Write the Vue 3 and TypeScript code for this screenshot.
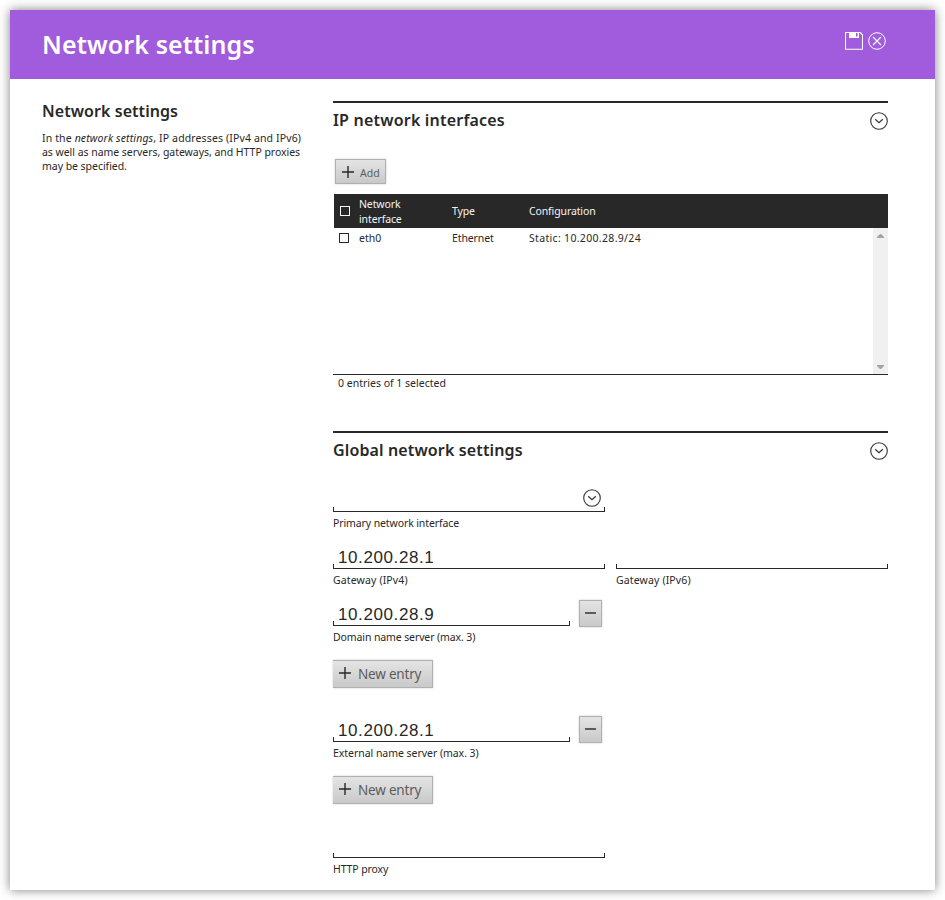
<script setup lang="ts">
import { ref } from 'vue'

interface NetworkInterface {
  name: string
  type: string
  configuration: string
}

const interfaces: NetworkInterface[] = [
  { name: 'eth0', type: 'Ethernet', configuration: 'Static: 10.200.28.9/24' },
]

const gatewayV4 = ref('10.200.28.1')
const gatewayV6 = ref('')
const domainServer = ref('10.200.28.9')
const externalServer = ref('10.200.28.1')
const proxy = ref('')
</script>

<template>
  <main class="window">
    <header class="titlebar">
      <h1>Network settings</h1>
      <div class="actions">
        <svg width="18" height="18" viewBox="0 0 18 18" fill="none" stroke="#fff">
          <path d="M.5.5H15.2L17.5 2.8V17.2H.5Z" stroke-width="1.1" />
          <path d="M4 0H14V6H4ZM11 1V4.5H12.6V1Z" fill="#fff" fill-rule="evenodd" stroke="none" />
        </svg>
        <svg width="18" height="18" viewBox="0 0 18 18" fill="none" stroke="#fff">
          <circle cx="9" cy="9" r="8.3" stroke-width="1" />
          <path d="M5 5 13 13M13 5 5 13" stroke-width="1.1" />
        </svg>
      </div>
    </header>

    <div class="content">
      <aside>
        <h2>Network settings</h2>
        <p>
          <span class="wide">In the <em>network settings</em>, IP addresses (IPv4 and IPv6)</span><br />
          <span class="tight">as well as name servers, gateways, and HTTP proxies</span><br />
          <span class="tight">may be specified.</span>
        </p>
      </aside>

      <div class="main">
        <section class="interfaces">
          <div class="section-head">
            <h2 class="ip">IP network interfaces</h2>
            <svg width="18" height="18" viewBox="0 0 18 18" fill="none" stroke="#333">
              <circle cx="9" cy="9" r="8.3" stroke-width="1.1" />
              <path d="M5.2 7.3 9 10.8 12.8 7.3" stroke-width="1.2" />
            </svg>
          </div>
          <button class="btn add" type="button">
            <svg width="12" height="12" viewBox="0 0 12 12" stroke="#282828" stroke-width="1.4">
              <path d="M0 6H12M6 0V12" />
            </svg>
            <span>Add</span>
          </button>
          <div class="row thead">
            <i class="check"></i>
            <span class="c-name">Network<br />interface</span>
            <span class="c-type">Type</span>
            <span>Configuration</span>
          </div>
          <div class="tbody">
            <div class="rows">
              <div v-for="item in interfaces" :key="item.name" class="row">
                <i class="check"></i>
                <span class="c-name">{{ item.name }}</span>
                <span class="c-type">{{ item.type }}</span>
                <span class="c-conf">{{ item.configuration }}</span>
              </div>
            </div>
            <div class="scroll">
              <svg width="7" height="4" viewBox="0 0 7 4"><path d="M0 4V3L3 0H4L7 3V4Z" fill="#a3a3a3" /></svg>
              <svg width="7" height="4" viewBox="0 0 7 4"><path d="M0 0V1L3 4H4L7 1V0Z" fill="#a3a3a3" /></svg>
            </div>
          </div>
          <div class="status">0 entries of 1 selected</div>
        </section>

        <section>
          <div class="section-head">
            <h2 class="global">Global network settings</h2>
            <svg width="18" height="18" viewBox="0 0 18 18" fill="none" stroke="#333">
              <circle cx="9" cy="9" r="8.3" stroke-width="1.1" />
              <path d="M5.2 7.3 9 10.8 12.8 7.3" stroke-width="1.2" />
            </svg>
          </div>

          <div class="line first">
            <div class="field">
              <div class="value select">
                <svg width="18" height="18" viewBox="0 0 18 18" fill="none" stroke="#333">
                  <circle cx="9" cy="9" r="8.3" stroke-width="1.1" />
                  <path d="M5.2 7.3 9 10.8 12.8 7.3" stroke-width="1.2" />
                </svg>
              </div>
              <label>Primary network interface</label>
            </div>
          </div>
          <div class="line">
            <div class="field">
              <div class="value"><span>{{ gatewayV4 }}</span></div>
              <label class="wide">Gateway (IPv4)</label>
            </div>
            <div class="field">
              <div class="value"><span>{{ gatewayV6 }}</span></div>
              <label class="wide">Gateway (IPv6)</label>
            </div>
          </div>
          <div class="line">
            <div class="field short">
              <div class="value"><span>{{ domainServer }}</span></div>
              <label>Domain name server (max. 3)</label>
            </div>
            <button class="btn remove" type="button"><i></i></button>
          </div>
          <div class="entry">
            <button class="btn new" type="button">
              <svg width="12" height="12" viewBox="0 0 12 12" stroke="#282828" stroke-width="1.4">
                <path d="M0 6H12M6 0V12" />
              </svg>
              <span>New entry</span>
            </button>
          </div>
          <div class="line">
            <div class="field short">
              <div class="value"><span>{{ externalServer }}</span></div>
              <label class="tight">External name server (max. 3)</label>
            </div>
            <button class="btn remove" type="button"><i></i></button>
          </div>
          <div class="entry">
            <button class="btn new" type="button">
              <svg width="12" height="12" viewBox="0 0 12 12" stroke="#282828" stroke-width="1.4">
                <path d="M0 6H12M6 0V12" />
              </svg>
              <span>New entry</span>
            </button>
          </div>
          <div class="line">
            <div class="field">
              <div class="value"><span>{{ proxy }}</span></div>
              <label>HTTP proxy</label>
            </div>
          </div>
        </section>
      </div>
    </div>
  </main>
</template>

<style>
body {
  background: #fff;
  overflow: hidden;
}
</style>

<style scoped>
* {
  box-sizing: border-box;
}
.window {
  width: 925px;
  height: 880px;
  margin: 10px;
  background: #fff;
  box-shadow: 0 0 10px rgba(0, 0, 0, 0.5);
  color: #282828;
  font: 10.5px/14px 'Noto Sans', sans-serif;
  white-space: nowrap;
}
svg {
  display: block;
  flex: none;
}
h1,
h2,
p {
  margin: 0;
}
.titlebar {
  height: 69px;
  padding: 0 49px 0 32px;
  display: flex;
  justify-content: space-between;
  background: #a05cdc;
  color: #fff;
}
h1 {
  font-size: 25px;
  line-height: 69px;
  font-weight: 600;
  letter-spacing: 0.1px;
}
.actions {
  display: flex;
  gap: 5px;
  padding-top: 22px;
}
.content {
  display: flex;
  padding: 21px 47px 0 32px;
}
aside {
  width: 291px;
  flex: none;
}
h2 {
  font-size: 16px;
  line-height: 22px;
  font-weight: 600;
  letter-spacing: 0.06px;
}
.ip {
  letter-spacing: 0.2px;
}
.global {
  letter-spacing: 0.13px;
}
aside p {
  padding-top: 9px;
}
.wide {
  letter-spacing: 0.13px;
}
.tight {
  letter-spacing: -0.04px;
}
.main {
  width: 555px;
  padding-top: 1px;
}
.interfaces {
  height: 330px;
}
.section-head {
  height: 37px;
  border-top: 2px solid #282828;
  display: flex;
  justify-content: space-between;
  padding-top: 9px;
}
.section-head h2 {
  line-height: 16px;
}
.btn {
  display: flex;
  align-items: center;
  border: 1px solid #b0b0b0;
  background: linear-gradient(#e4e4e4, #c9c9c9);
  box-shadow: 0 0 2px rgba(0, 0, 0, 0.2);
  color: #5c5c5c;
  font-family: inherit;
  padding: 0;
}
.add {
  width: 51px;
  height: 25px;
  margin: 21px 0 0 2px;
  padding-left: 6px;
  gap: 6px;
  font-size: 10.5px;
}
.add span {
  padding-top: 2px;
}
.row {
  display: flex;
  align-items: center;
  height: 20px;
  padding-left: 6px;
}
.thead {
  height: 34px;
  margin: 10px 0 0 1px;
  background: #282828;
  color: #f4f4f4;
  line-height: 15px;
  letter-spacing: -0.12px;
}
.check {
  width: 10px;
  height: 10px;
  flex: none;
  border: 1px solid currentColor;
  margin-right: 10px;
}
.thead .check {
  margin-right: 9px;
}
.c-name {
  width: 93px;
}
.thead .c-name {
  padding-top: 2px;
}
.c-type {
  width: 77px;
  letter-spacing: -0.12px;
}
.c-conf {
  letter-spacing: 0.32px;
}
.tbody {
  display: flex;
  height: 147px;
  border-bottom: 1px solid #282828;
}
.rows {
  flex: 1;
}
.scroll {
  width: 15px;
  background: #f0f0f0;
  display: flex;
  flex-direction: column;
  align-items: center;
  justify-content: space-between;
  padding: 6px 0 5px;
}
.status {
  padding: 1px 0 0 5px;
}
.line {
  display: flex;
  height: 57px;
}
.first {
  margin-top: 12px;
}
.field {
  flex: none;
  width: 272px;
  margin-right: 11px;
}
.short {
  width: 237px;
  margin-right: 9px;
}
.value {
  height: 32px;
  padding: 10px 0 0 5px;
  font: 17px/22px 'Liberation Sans', Arial, sans-serif;
  letter-spacing: 0.6px;
  background:
    linear-gradient(#282828, #282828) 0 100% / 100% 1px no-repeat,
    linear-gradient(#282828, #282828) 0 100% / 1px 5px no-repeat,
    linear-gradient(#282828, #282828) 100% 100% / 1px 5px no-repeat;
}
.select {
  display: flex;
  justify-content: flex-end;
  padding: 9px 4px 0 0;
}
label {
  display: block;
  padding-top: 4px;
  letter-spacing: -0.11px;
}
label.wide {
  letter-spacing: 0.14px;
}
label.tight {
  letter-spacing: -0.04px;
}
.remove {
  width: 23px;
  height: 27px;
  margin-top: 6px;
  justify-content: center;
}
.remove i {
  width: 11px;
  height: 2px;
  margin-bottom: 2px;
  background: #5c5c5c;
}
.entry {
  height: 59px;
  padding-top: 9px;
}
.new {
  width: 100px;
  height: 28px;
  border-left: 0;
  padding-left: 6px;
  gap: 7px;
  font-size: 13.5px;
  letter-spacing: -0.2px;
}
.new svg {
  margin-bottom: 2px;
}
</style>
